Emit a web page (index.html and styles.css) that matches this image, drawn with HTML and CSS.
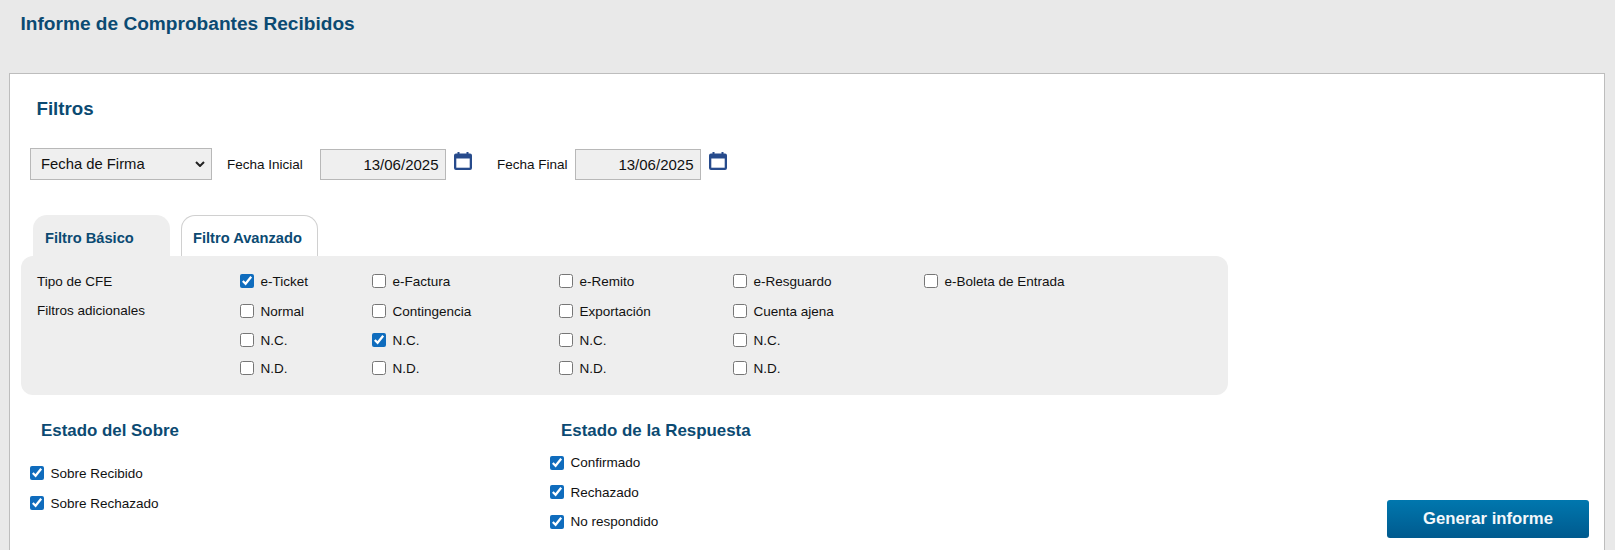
FILE: index.html
```html
<!DOCTYPE html>
<html lang="es">
<head>
<meta charset="utf-8">
<title>Informe de Comprobantes Recibidos</title>
<link rel="stylesheet" href="styles.css">
</head>
<body>
<header class="page-head"><h1 class="page-title">Informe de Comprobantes Recibidos</h1></header>
<main class="card">
  <h2 class="filters-title">Filtros</h2>
  <div class="dates">
    <select class="date-kind"><option>Fecha de Firma</option></select>
    <label class="date-label date-label-start">Fecha Inicial</label>
    <input class="date-input" type="text" value="13/06/2025" readonly>
    <svg class="cal" viewBox="0 0 18 18" aria-hidden="true"><path fill="#274b8c" d="M2 1.500h1.500V0h2v1.500h7V0h2v1.500H16a2 2 0 0 1 2 2V16a2 2 0 0 1-2 2H2a2 2 0 0 1-2-2V3.500a2 2 0 0 1 2-2z"/><rect x="2.300" y="6.500" width="13.400" height="9.200" fill="#fff"/></svg>
    <label class="date-label date-label-end">Fecha Final</label>
    <input class="date-input" type="text" value="13/06/2025" readonly>
    <svg class="cal" viewBox="0 0 18 18" aria-hidden="true"><path fill="#274b8c" d="M2 1.500h1.500V0h2v1.500h7V0h2v1.500H16a2 2 0 0 1 2 2V16a2 2 0 0 1-2 2H2a2 2 0 0 1-2-2V3.500a2 2 0 0 1 2-2z"/><rect x="2.300" y="6.500" width="13.400" height="9.200" fill="#fff"/></svg>
  </div>
  <nav class="tabs">
    <a class="tab tab-basic">Filtro Básico</a>
    <a class="tab tab-advanced">Filtro Avanzado</a>
  </nav>
  <section class="panel">
    <span class="row-label">Tipo de CFE</span>
    <label class="opt"><input type="checkbox" checked>e-Ticket</label>
    <label class="opt"><input type="checkbox">e-Factura</label>
    <label class="opt"><input type="checkbox">e-Remito</label>
    <label class="opt"><input type="checkbox">e-Resguardo</label>
    <label class="opt"><input type="checkbox">e-Boleta de Entrada</label>

    <span class="row-label row-label-up">Filtros adicionales</span>
    <label class="opt"><input type="checkbox">Normal</label>
    <label class="opt"><input type="checkbox">Contingencia</label>
    <label class="opt"><input type="checkbox">Exportación</label>
    <label class="opt"><input type="checkbox">Cuenta ajena</label>
    <span></span>

    <span></span>
    <label class="opt"><input type="checkbox">N.C.</label>
    <label class="opt"><input type="checkbox" checked>N.C.</label>
    <label class="opt"><input type="checkbox">N.C.</label>
    <label class="opt"><input type="checkbox">N.C.</label>
    <span></span>

    <span></span>
    <label class="opt"><input type="checkbox">N.D.</label>
    <label class="opt"><input type="checkbox">N.D.</label>
    <label class="opt"><input type="checkbox">N.D.</label>
    <label class="opt"><input type="checkbox">N.D.</label>
    <span></span>
  </section>
  <section class="states">
    <div class="state state-envelope">
      <h3 class="state-title">Estado del Sobre</h3>
      <div class="state-list state-list-envelope">
        <label class="opt"><input type="checkbox" checked>Sobre Recibido</label>
        <label class="opt"><input type="checkbox" checked>Sobre Rechazado</label>
      </div>
    </div>
    <div class="state state-response">
      <h3 class="state-title">Estado de la Respuesta</h3>
      <div class="state-list state-list-response">
        <label class="opt"><input type="checkbox" checked>Confirmado</label>
        <label class="opt"><input type="checkbox" checked>Rechazado</label>
        <label class="opt"><input type="checkbox" checked>No respondido</label>
      </div>
    </div>
    <button class="generate" type="button">Generar informe</button>
  </section>
</main>
</body>
</html>
```
FILE: styles.css
```css
html, body {
  margin: 0;
  height: 550px;
  overflow: hidden;
}
body {
  background: #e9e9e9;
  font-family: "Liberation Sans", Arial, sans-serif;
  font-size: 13.5px;
  color: #111;
}
.page-head {
  height: 73px;
  padding: 13px 0 0 20.5px;
  box-sizing: border-box;
}
.page-title {
  margin: 0;
  font-size: 19.1px;
  line-height: 21px;
  font-weight: 700;
  color: #0b4a72;
}
.card {
  margin-left: 9px;
  width: 1596px;
  height: 477px;
  box-sizing: border-box;
  background: #fff;
  border: 1px solid #bdbdbd;
  border-bottom: 0;
}
.filters-title {
  margin: 0;
  padding: 24px 0 0 26.5px;
  font-size: 18.7px;
  line-height: 22px;
  font-weight: 700;
  color: #0b4a72;
}
.dates {
  display: flex;
  align-items: center;
  height: 32px;
  margin: 28px 0 0 20px;
}
.date-kind {
  appearance: none;
  width: 182px;
  height: 32px;
  padding-left: 10px;
  background: #efefef url("data:image/svg+xml,%3Csvg xmlns='http://www.w3.org/2000/svg' width='10' height='6'%3E%3Cpath d='M1 1l4 4 4-4' fill='none' stroke='%23222' stroke-width='2'/%3E%3C/svg%3E") no-repeat right 6px center;
  border: 1px solid #b8b8b8;
  border-radius: 0;
  font: 14.8px "Liberation Sans", Arial, sans-serif;
  color: #111;
}
.date-label { white-space: nowrap; }
.date-label-start { margin-left: 15px; width: 93px; }
.date-label-end { margin-left: 25.5px; width: 78px; }
.date-input {
  width: 125.5px;
  height: 31px;
  box-sizing: border-box;
  padding: 0 6px 0 0;
  text-align: right;
  background: #efefef;
  border: 1px solid #b8b8b8;
  border-radius: 0;
  font: 15px "Liberation Sans", Arial, sans-serif;
  color: #111;
  outline: none;
}
.cal {
  width: 18px;
  height: 18px;
  margin: -7px 0 0 8px;
}
.tabs {
  display: flex;
  gap: 11px;
  margin: 35px 0 0 23px;
  height: 41px;
}
.tab {
  width: 137px;
  height: 41px;
  box-sizing: border-box;
  padding: 15px 0 0 12px;
  border-radius: 14px 14px 0 0;
  font-size: 14.67px;
  line-height: 17px;
  font-weight: 700;
  color: #0b4a72;
}
.tab-basic { background: #eee; }
.tab-advanced {
  background: #fff;
  border: 1px solid #d0d0d0;
  border-bottom: 0;
  padding: 14px 0 0 11px;
}
.panel {
  display: grid;
  grid-template-columns: 203px 132px 187px 174px 191px 1fr;
  grid-template-rows: 30px 30px 28px 28px;
  width: 1207px;
  height: 139px;
  box-sizing: border-box;
  margin-left: 11px;
  padding: 10px 0 13px 16px;
  align-items: center;
  background: #eee;
  border-radius: 12px;
}
.row-label-up { margin-bottom: 2px; }
.opt {
  display: flex;
  align-items: center;
  white-space: nowrap;
}
.opt input {
  width: 14px;
  height: 14px;
  margin: 0 6.5px 0 0;
  accent-color: #0f6cbd;
}
.states {
  display: flex;
  height: 143px;
  padding: 0 15px 0 20px;
  box-sizing: border-box;
}
.state-envelope { width: 520px; }
.state-title {
  margin: 0;
  padding: 26px 0 0 11px;
  font-size: 16.9px;
  line-height: 20px;
  font-weight: 700;
  color: #0b4a72;
}
.state-list {
  display: grid;
  align-items: center;
}
.state-list-envelope { margin-top: 17px; grid-auto-rows: 30px; }
.state-list-response { margin-top: 7px; grid-auto-rows: 29.5px; }
.generate {
  width: 202px;
  height: 38px;
  margin: auto 0 0 auto;
  padding: 0;
  border: 0;
  border-radius: 3px;
  background: linear-gradient(#0077ae, #005a8e);
  font: 700 16.7px "Liberation Sans", Arial, sans-serif;
  color: #f4f8fb;
}
```
